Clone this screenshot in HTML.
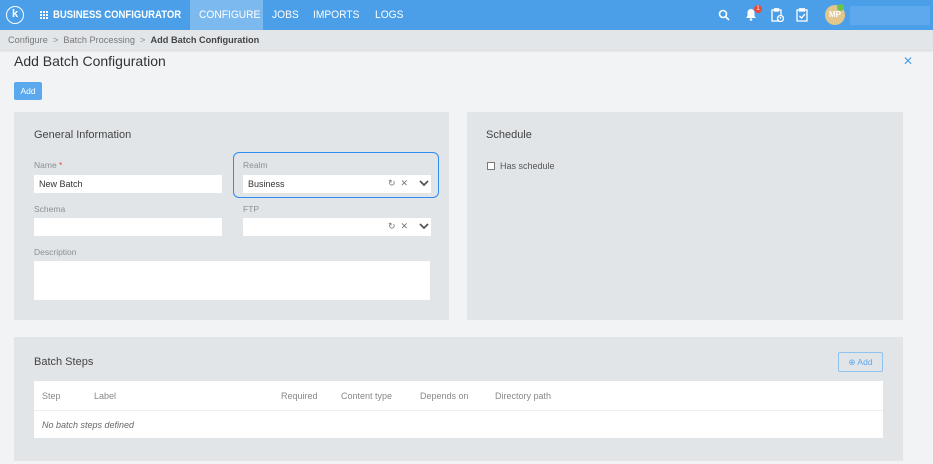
<!DOCTYPE html>
<html><head><meta charset="utf-8"><style>
*{box-sizing:border-box;margin:0;padding:0}
body{width:933px;height:464px;background:#f2f3f5;font-family:"Liberation Sans",sans-serif;position:relative;overflow:hidden;color:#333}
.a{position:absolute}
.top{left:0;top:0;width:933px;height:30px;background:#4a9fe8}
.nav{color:#fff;font-size:11px;top:9px;transform-origin:left top;white-space:nowrap}
.bc{left:0;top:30px;width:933px;height:20px;background:#e3e6e9;box-shadow:0 1px 2px rgba(0,0,0,.12)}
.panel{background:#e2e5e8}
.lbl{font-size:8.5px;color:#8a8f94}
.inp{background:#fff;height:18px;font-size:9px;padding:4px 5px;color:#333}
.ic{font-size:9px;color:#777}
.th{font-size:9px;color:#888;top:391px}
</style></head><body>
<div class="a top"></div>
<div class="a" style="left:6px;top:6px;width:18px;height:18px;border:1.5px solid #fff;border-radius:50%;color:#fff;font-size:11px;font-weight:bold;text-align:center;line-height:15px">k</div>
<svg class="a" style="left:40px;top:11px" width="8" height="8" fill="#fff"><rect x="0" y="0" width="2" height="2"/><rect x="3" y="0" width="2" height="2"/><rect x="6" y="0" width="2" height="2"/><rect x="0" y="3" width="2" height="2"/><rect x="3" y="3" width="2" height="2"/><rect x="6" y="3" width="2" height="2"/><rect x="0" y="6" width="2" height="2"/><rect x="3" y="6" width="2" height="2"/><rect x="6" y="6" width="2" height="2"/></svg>
<div class="a nav" style="left:53px;font-weight:bold;transform:scaleX(0.865)">BUSINESS CONFIGURATOR</div>
<div class="a" style="left:190px;top:0;width:73px;height:30px;background:#7cb9ee"></div>
<div class="a nav" style="left:199px;transform:scaleX(0.93)">CONFIGURE</div>
<div class="a nav" style="left:272px;transform:scaleX(0.93)">JOBS</div>
<div class="a nav" style="left:313px;transform:scaleX(0.93)">IMPORTS</div>
<div class="a nav" style="left:375px;transform:scaleX(0.93)">LOGS</div>
<svg class="a" style="left:718px;top:9px" width="12" height="12" fill="none" stroke="#fff" stroke-width="1.6"><circle cx="5" cy="5" r="3.5"/><path d="M7.5 7.5L11 11"/></svg>
<svg class="a" style="left:745px;top:8px" width="12" height="13" fill="#fff"><path d="M6 1C3.5 1 2.5 3 2.5 5v3L1 10h10L9.5 8V5C9.5 3 8.5 1 6 1z"/><circle cx="6" cy="11.5" r="1.3"/></svg>
<div class="a" style="left:754px;top:5px;width:8px;height:8px;border-radius:50%;background:#e74c3c;color:#fff;font-size:6px;text-align:center;line-height:8px">1</div>
<svg class="a" style="left:771px;top:8px" width="13" height="14" fill="none" stroke="#fff" stroke-width="1.3"><rect x="1" y="2" width="9" height="11"/><rect x="3.5" y="0.8" width="4" height="2.2" fill="#fff"/><circle cx="9.5" cy="10.5" r="3" fill="#4a9fe8"/><path d="M9.5 9v1.8"/></svg>
<svg class="a" style="left:796px;top:8px" width="12" height="14" fill="none" stroke="#fff" stroke-width="1.3"><rect x="1" y="2" width="10" height="11"/><rect x="3.5" y="0.8" width="5" height="2.2" fill="#fff"/><path d="M3.5 8l2 2 3.5-4"/></svg>
<div class="a" style="left:825px;top:5px;width:20px;height:20px;border-radius:50%;background:#e2c68c;color:#fff;font-size:8px;font-weight:bold;text-align:center;line-height:20px">MP</div>
<div class="a" style="left:837px;top:4px;width:7px;height:7px;border-radius:50%;background:#6cc24a"></div>
<div class="a" style="left:850px;top:6px;width:80px;height:19px;background:#5ea8ee"></div>
<div class="a bc"></div>
<div class="a" style="left:8px;top:35px;font-size:9.2px;color:#777">Configure &nbsp;<span style="color:#888">&gt;</span>&nbsp; Batch Processing &nbsp;<span style="color:#888">&gt;</span>&nbsp; <b style="color:#444">Add Batch Configuration</b></div>
<div class="a" style="left:14px;top:53px;font-size:14px;color:#333">Add Batch Configuration</div>
<div class="a" style="left:903px;top:54px;font-size:12px;color:#4a9fe8">✕</div>
<div class="a" style="left:14px;top:82px;width:28px;height:18px;background:#5aa9ef;border-radius:2px;color:#fff;font-size:8.5px;text-align:center;line-height:18px">Add</div>

<div class="a panel" style="left:14px;top:112px;width:435px;height:208px"></div>
<div class="a" style="left:34px;top:129px;font-size:11px;color:#444">General Information</div>
<div class="a lbl" style="left:34px;top:160px">Name <span style="color:#e74c3c">*</span></div>
<div class="a inp" style="left:34px;top:175px;width:188px">New Batch</div>
<div class="a lbl" style="left:34px;top:204px">Schema</div>
<div class="a inp" style="left:34px;top:218px;width:188px"></div>
<div class="a lbl" style="left:34px;top:247px">Description</div>
<div class="a inp" style="left:34px;top:261px;width:396px;height:39px"></div>
<div class="a" style="left:233px;top:152px;width:206px;height:46px;border:1.5px solid #2f8df0;border-radius:6px"></div>
<div class="a lbl" style="left:243px;top:160px">Realm</div>
<div class="a inp" style="left:243px;top:175px;width:188px">Business</div>
<div class="a ic" style="left:388px;top:178px">↻&nbsp;&nbsp;✕</div>
<svg class="a" style="left:419px;top:180px" width="10" height="7" fill="none" stroke="#555" stroke-width="1.8"><path d="M1 1l4 4 4-4"/></svg>
<div class="a lbl" style="left:243px;top:204px">FTP</div>
<div class="a inp" style="left:243px;top:218px;width:188px"></div>
<div class="a ic" style="left:388px;top:221px">↻&nbsp;&nbsp;✕</div>
<svg class="a" style="left:419px;top:223px" width="10" height="7" fill="none" stroke="#555" stroke-width="1.8"><path d="M1 1l4 4 4-4"/></svg>

<div class="a panel" style="left:467px;top:112px;width:436px;height:208px"></div>
<div class="a" style="left:486px;top:129px;font-size:11px;color:#444">Schedule</div>
<div class="a" style="left:487px;top:162px;width:8px;height:8px;border:1px solid #777;background:#fff"></div>
<div class="a" style="left:500px;top:161px;font-size:9px;color:#555">Has schedule</div>

<div class="a panel" style="left:14px;top:337px;width:889px;height:124px"></div>
<div class="a" style="left:34px;top:356px;font-size:11px;color:#444">Batch Steps</div>
<div class="a" style="left:838px;top:352px;width:45px;height:20px;border:1px solid #8ec2f0;border-radius:2px;color:#5aa9ef;font-size:8.5px;text-align:center;line-height:18px">⊕ Add</div>
<div class="a" style="left:34px;top:381px;width:849px;height:57px;background:#fff"></div>
<div class="a" style="left:34px;top:410px;width:849px;height:1px;background:#eee"></div>
<div class="a th" style="left:42px">Step</div>
<div class="a th" style="left:94px">Label</div>
<div class="a th" style="left:281px">Required</div>
<div class="a th" style="left:341px">Content type</div>
<div class="a th" style="left:420px">Depends on</div>
<div class="a th" style="left:495px">Directory path</div>
<div class="a" style="left:42px;top:420px;font-size:9px;color:#666;font-style:italic">No batch steps defined</div>
</body></html>
